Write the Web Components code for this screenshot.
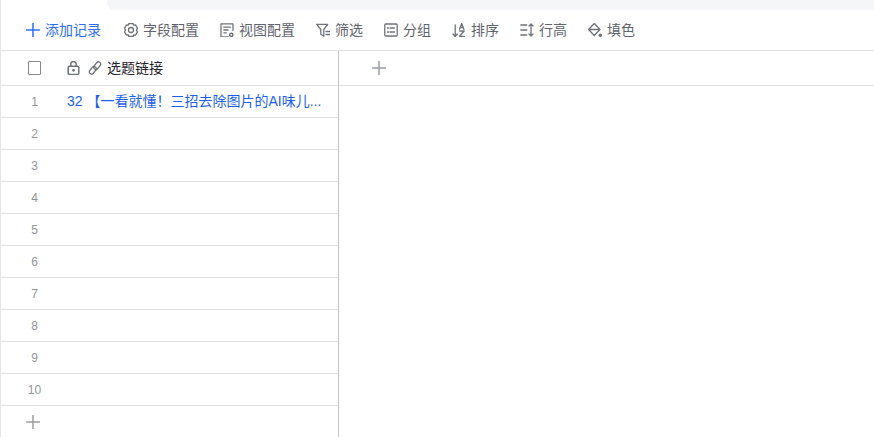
<!DOCTYPE html>
<html><head><meta charset="utf-8"><style>
html,body{margin:0;padding:0;background:#fff;height:100%;overflow:hidden}
body{font-family:"Noto Sans CJK SC","Liberation Sans",sans-serif;font-size:14px}
</style></head><body>
<app-shell>
<tool-bar>
<tool-item accent label="添加记录" icon="plus"></tool-item>
<tool-item label="字段配置" icon="gear"></tool-item>
<tool-item label="视图配置" icon="view"></tool-item>
<tool-item label="筛选" icon="filter"></tool-item>
<tool-item label="分组" icon="group"></tool-item>
<tool-item label="排序" icon="sort"></tool-item>
<tool-item label="行高" icon="height"></tool-item>
<tool-item label="填色" icon="fill"></tool-item>
</tool-bar>
<data-grid></data-grid>
</app-shell>
<script>
const G='#6f7379';
const ICONS={
plus:'<path d="M7 0.5v13M0.5 7h13" stroke-width="1.5"/>',
gear:'<path d="M4.900.5h4.200l.6 1.700 1.800-.3 2 3.300-1.100 1.800 1.100 1.800-2 3.300-1.800-.3-.6 1.700H4.900l-.6-1.700-1.800.3-2-3.300L1.600 7 .5 5.200l2-3.300 1.800.3z"/><circle cx="7" cy="7" r="2.500"/>',
view:'<path d="M13 7.500V.8H1v13h7.500"/><path d="M3.800 4.200h6.400M3.800 7h4.200M3.800 9.800h2.500"/><circle cx="11.300" cy="11.800" r="1.600" stroke-width="1.500"/>',
filter:'<path d="M.8 1.300h10.900L7.800 6.500v6.700l-3-1.900V6.500z"/><path d="M10 8.500h3.500M10 11.500h3.500"/>',
group:'<rect x=".8" y="1" width="12.400" height="12" rx="1"/><path d="M3.500 5h1.200M6.300 5h4.200M3.500 9h1.200M6.300 9h4.200"/>',
sort:'<path d="M3.200 2v11.500M1 11l2.200 2.500L5.400 11"/><path d="M7.500 6.300L9.700.5l2.200 5.800M8.300 4.500h2.800M7.700 8h4.500L7.500 13.300h5"/>',
height:'<path d="M.8 2h6M.8 7h6M.8 12h6"/><path d="M11 1v12M9 3l2-2 2 2M9 11l2 2 2-2"/>',
fill:'<path d="M6.300.5L.6 6.500l5.700 6 5.700-6z"/><path d="M1.200 6.500h10.200" stroke-width="1.500"/><circle cx="12.300" cy="12.200" r="1.700" fill="'+G+'" stroke="none"/>',
lock:'<rect x="1.200" y="5.300" width="10.600" height="8.200" rx="1.500" stroke-width="1.500"/><path d="M3.800 5.300V3.300a2.700 2.700 0 0 1 5.400 0v2" stroke-width="1.500"/><circle cx="6.500" cy="9.300" r="1.400" fill="'+G+'" stroke="none"/>',
link:'<rect x="7" y="0.500" width="4.400" height="8.400" rx="2.200" transform="rotate(38 9.200 4.700)"/><rect x="2.600" y="5.100" width="4.400" height="8.400" rx="2.200" transform="rotate(38 4.800 9.300)"/>'
};
function svg(name,color,w=14,h=14){
 return `<svg width="${w}" height="${h}" viewBox="0 0 14 14" fill="none" stroke="${color}" stroke-width="1.300" stroke-linecap="round" stroke-linejoin="round">${ICONS[name]}</svg>`;
}
customElements.define('app-shell',class extends HTMLElement{
 constructor(){super();this.attachShadow({mode:'open'}).innerHTML=`<style>
 :host{display:flex;flex-direction:column;height:437px;width:874px;box-sizing:border-box;border-left:1px solid #e4e5e7;position:relative}
 .strip{height:10px;margin-left:106px;background:#f5f6f7;border-bottom-left-radius:8px;flex:none}
 </style><div class="strip"></div><slot></slot>`}
});
customElements.define('tool-bar',class extends HTMLElement{
 constructor(){super();this.attachShadow({mode:'open'}).innerHTML=`<style>
 :host{display:flex;align-items:center;gap:21px;height:40px;padding-left:25px;border-bottom:1px solid #dfe0e2;flex:none}
 ::slotted([accent]){margin-right:2px}
 </style><slot></slot>`}
});
customElements.define('tool-item',class extends HTMLElement{
 connectedCallback(){
  const a=this.hasAttribute('accent');
  const c=a?'#2d6df6':G;
  this.attachShadow({mode:'open'}).innerHTML=`<style>
  :host{display:inline-flex;align-items:center;gap:5px;font:14px/20px "Noto Sans CJK SC",sans-serif;color:${a?'#2d6df6':'#5f646c'}}
  svg{display:block;flex:none}
  span{padding-bottom:2px}
  </style>${svg(this.getAttribute('icon'),c)}<span>${this.getAttribute('label')}</span>`;
 }
});
customElements.define('grid-row',class extends HTMLElement{
 connectedCallback(){
  this.attachShadow({mode:'open'}).innerHTML=`<style>
  :host{display:flex;align-items:center;height:31px;border-bottom:1px solid #dfe0e2}
  .n{width:66px;flex:none;text-align:center;padding-left:1px;box-sizing:border-box;font:12px "Liberation Sans",sans-serif;color:#92959b}
  .c{flex:1;min-width:0;white-space:nowrap;overflow:hidden;color:#1d5fe8;font:14px/20px "Liberation Sans","Noto Sans CJK SC",sans-serif;padding-bottom:2px}
  </style><div class="n"><slot name="n"></slot></div><div class="c"><slot></slot></div>`;
 }
});
customElements.define('data-grid',class extends HTMLElement{
 constructor(){super();
  let rows='';
  for(let i=1;i<=10;i++){rows+=`<grid-row><span slot="n">${i}</span>${i==1?'32 【一看就懂！三招去除图片的AI味儿...':''}</grid-row>`}
  this.attachShadow({mode:'open'}).innerHTML=`<style>
  :host{display:flex;flex:1;min-height:0}
  .left{width:337px;flex:none;border-right:1px solid #c4c5c9;display:flex;flex-direction:column}
  .right{flex:1}
  .head{height:34px;border-bottom:1px solid #dfe0e2;display:flex;align-items:center}
  .chk{width:66px;flex:none;display:flex;justify-content:center}
  .box{width:11.500px;height:11.500px;border:1.500px solid #85888e;border-radius:1px;margin-left:1px}
  .ttl{display:flex;align-items:center;gap:6px;font:14px/20px "Noto Sans CJK SC",sans-serif;color:#1f2329}
  .ttl span:last-child{padding-bottom:2px}
  .icons{display:flex;gap:7px;align-items:center}
  .icons svg:last-child{margin-right:-1px}
  svg{display:block}
  .add{display:flex;align-items:center;flex:1}
  .addL{width:64px;display:flex;justify-content:center}
  .rh{height:34px;border-bottom:1px solid #dfe0e2;display:flex;align-items:center;padding-left:33px}
  </style>
  <div class="left">
   <div class="head"><div class="chk"><div class="box"></div></div>
    <div class="ttl"><span class="icons">${svg('lock',G,14,14)}${svg('link',G,14,14)}</span><span>选题链接</span></div></div>
   ${rows}
   <div class="add"><div class="addL">${svg('plus','#9a9da3')}</div></div>
  </div>
  <div class="right"><div class="rh">${svg('plus','#9a9da3')}</div></div>`;
 }
});
</script>
</body></html>
